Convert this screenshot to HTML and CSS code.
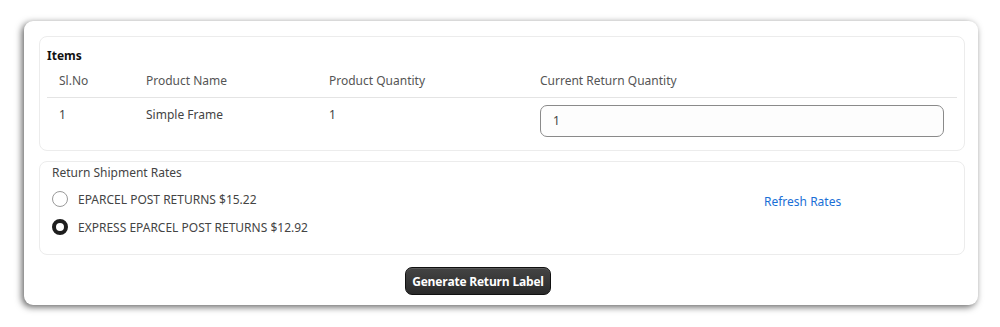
FILE: index.html
```html
<!DOCTYPE html>
<html>
<head>
<meta charset="utf-8">
<link rel="stylesheet" href="styles.css">
</head>
<body>
<div class="card">
  <section class="panel items">
    <div class="title">Items</div>
    <table class="tbl">
      <colgroup>
        <col class="c1"><col class="c2"><col class="c3"><col class="c4">
      </colgroup>
      <thead>
        <tr><th>Sl.No</th><th>Product Name</th><th>Product Quantity</th><th>Current Return Quantity</th></tr>
      </thead>
      <tbody>
        <tr><td>1</td><td>Simple Frame</td><td>1</td><td><input class="qty" type="text" value="1"></td></tr>
      </tbody>
    </table>
  </section>
  <section class="panel rates">
    <div class="rates-title">Return Shipment Rates</div>
    <div class="rates-body">
      <div class="options">
        <label class="opt"><span class="radio"></span>EPARCEL POST RETURNS $15.22</label>
        <label class="opt"><span class="radio on"></span>EXPRESS EPARCEL POST RETURNS $12.92</label>
      </div>
      <a class="refresh" href="#">Refresh Rates</a>
    </div>
  </section>
  <div class="actions">
    <button class="gen">Generate Return Label</button>
  </div>
</div>
</body>
</html>
```
FILE: styles.css
```css
html, body { margin: 0; padding: 0; background: #fff; }
body {
  font-family: "Noto Sans", "Open Sans", sans-serif;
  font-size: 12px;
  color: #444;
  padding: 21px 22px 22px 24px;
}
.card {
  width: 954px;
  height: 284px;
  box-sizing: border-box;
  background: #fff;
  border-radius: 9px;
  box-shadow: -2px 2px 7px rgba(0,0,0,0.62);
  padding: 15px 13px 0 15px;
}
.panel {
  border: 1px solid #ececec;
  border-radius: 8px;
  box-sizing: border-box;
}
.items {
  height: 115px;
  padding: 10px 7px 0 7px;
}
.title {
  font-weight: 700;
  color: #111;
  font-size: 12px;
  line-height: 18px;
}
.tbl {
  width: 100%;
  border-collapse: collapse;
}
.c1 { width: 87px; }
.c2 { width: 183px; }
.c3 { width: 211px; }
.tbl th {
  font-weight: 400;
  text-align: left;
  color: #555;
  padding: 0 12px;
  height: 32px;
  line-height: 16px;
  vertical-align: middle;
  border-bottom: 1px solid #e4e4e4;
  box-sizing: border-box;
}
.tbl td {
  padding: 7px 12px 0 12px;
  vertical-align: top;
  color: #444;
  line-height: 20px;
}
.tbl td:last-child { padding-right: 13px; }
.qty {
  display: block;
  width: 100%;
  box-sizing: border-box;
  height: 32px;
  border: 1px solid #8a8a8a;
  border-radius: 7px;
  background: #fdfdfd;
  font-family: inherit;
  font-size: 12px;
  color: #444;
  padding: 0 12px;
  margin: 0;
  outline: none;
}
.rates {
  margin-top: 10px;
  height: 94px;
  padding: 2px 12px 0 12px;
}
.rates-title {
  line-height: 18px;
  color: #444;
}
.rates-body {
  display: flex;
  align-items: flex-start;
}
.options {
  width: 712px;
  display: flex;
  flex-direction: column;
  gap: 8px;
  padding-top: 7px;
}
.opt {
  display: flex;
  align-items: center;
  gap: 10px;
  height: 20px;
  color: #444;
}
.radio {
  width: 16px;
  height: 16px;
  box-sizing: border-box;
  border: 1px solid #9a9a9a;
  border-radius: 50%;
  background: #fff;
}
.radio.on {
  border: 4.5px solid #1e1e1e;
}
.refresh {
  color: #1a6fd6;
  text-decoration: none;
  margin-top: 12px;
  line-height: 16px;
}
.actions {
  padding: 12px 0 0 366px;
}
.gen {
  width: 146px;
  height: 28px;
  border: 1px solid #111;
  border-radius: 7px;
  background: linear-gradient(#444, #2a2a2a);
  color: #fff;
  font-family: "Open Sans", "Noto Sans", sans-serif;
  font-weight: 700;
  font-size: 12px;
  letter-spacing: -0.2px;
  padding: 0;
  box-shadow: inset 0 1px 0 rgba(255,255,255,0.12);
}
```
